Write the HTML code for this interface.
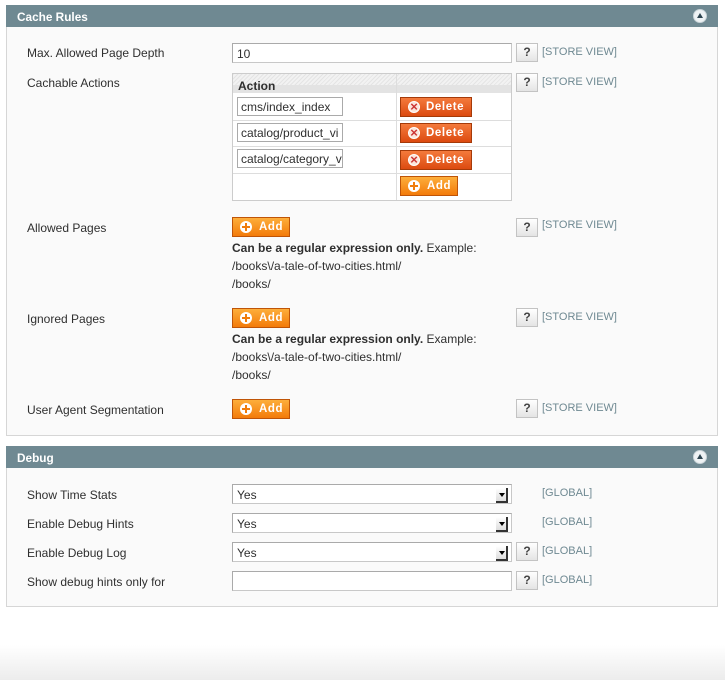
<!DOCTYPE html>
<html><head><meta charset="utf-8"><style>
*{box-sizing:border-box;margin:0;padding:0}
body{width:725px;height:680px;position:relative;background:#fff;font:12px "Liberation Sans",sans-serif;color:#2f2f2f;overflow:hidden}
.a{position:absolute}
.hd{position:absolute;left:6px;width:712px;height:22px;background:#6f8992;color:#fff;font-weight:bold;font-size:11.8px;padding:5px 0 0 11px}
.hd .t{position:absolute;right:11px;top:4px;width:14px;height:14px;border-radius:50%;background:#eef2f4;border:1px solid #c9d4d8}
.hd .t:after{content:"";position:absolute;left:3px;top:3px;border-left:3px solid transparent;border-right:3px solid transparent;border-bottom:5px solid #2d4450}
.pn{position:absolute;left:6px;width:712px;background:#fafafa;border:1px solid #d6d6d6;border-top:none}
.lb{position:absolute;left:27px}
.in{position:absolute;left:232px;width:280px;height:20px;background:#fff;border:1px solid #aaa;border-color:#aaa #c8c8c8 #c8c8c8 #aaa;padding:3px 4px;font-size:12px}
.q{position:absolute;left:516px;width:22px;height:19px;background:linear-gradient(#fff,#e4e4e4);border:1px solid #c3c3c3;font-weight:bold;text-align:center;line-height:17px;color:#444}
.sc{position:absolute;left:542px;color:#6f8992;font-size:11px}
.bt{position:absolute;height:20px;border:1px solid #bf5407;color:#fff;font-weight:bold;font-size:11.5px;line-height:18px;padding-left:26px;letter-spacing:.6px}
.or{background:linear-gradient(#fdae3b,#f37b0a)}
.rd{padding-left:25px;background:linear-gradient(#f47a3c,#dc4a10);border-color:#a53a09}
.bt i{position:absolute;left:7px;top:3px;width:12px;height:12px;border-radius:50%;background:#fff}
.or i:before,.or i:after{content:"";position:absolute;background:#f07d0c;left:5px;top:2px;width:2px;height:8px}
.or i:after{left:2px;top:5px;width:8px;height:2px}
.rd i{background:#fbe5da;border:1px solid #fff}
.rd i:before{content:"×";position:absolute;left:1px;top:-4px;color:#c33;font-size:13px;font-weight:bold}
.ti{position:absolute;left:237px;width:106px;height:19px;background:#fff;border:1px solid #aaa;padding:2px 3px;font-size:12px;overflow:hidden;white-space:nowrap}
.sel:after{content:"";position:absolute;right:3px;top:3px;width:10px;height:13px;border-right:2px solid #333;border-bottom:2px solid #333;background:linear-gradient(#fff,#ddd)}
.sel:before{content:"";position:absolute;right:6px;top:8px;border-left:3px solid transparent;border-right:3px solid transparent;border-top:4px solid #000;z-index:1}
.tx{position:absolute;left:232px}
</style></head><body>
<div class="hd" style="top:5px">Cache Rules<span class="t"></span></div>
<div class="pn" style="top:27px;height:409px"></div>
<div class="lb" style="top:46px">Max. Allowed Page Depth</div>
<div class="in" style="top:43px">10</div>
<div class="q" style="top:43px">?</div><div class="sc" style="top:46px">[STORE VIEW]</div>
<div class="lb" style="top:76px">Cachable Actions</div>
<div class="q" style="top:73px">?</div><div class="sc" style="top:76px">[STORE VIEW]</div>
<div class="a" style="left:232px;top:73px;width:280px;height:128px;background:#fff;border:1px solid #ccc"></div>
<div class="a" style="left:233px;top:74px;width:278px;height:19px;background:repeating-linear-gradient(135deg,#e4e4e4 0 1px,#f2f2f2 1px 3px)"></div>
<div class="a" style="left:233px;top:85px;width:278px;height:8px;background:#e3e3e3"></div>
<div class="a" style="left:238px;top:79px;font-weight:bold">Action</div>
<div class="a" style="left:396px;top:74px;width:1px;height:126px;background:#ddd"></div>
<div class="a" style="left:233px;top:120px;width:278px;height:1px;background:#ddd"></div>
<div class="a" style="left:233px;top:146px;width:278px;height:1px;background:#ddd"></div>
<div class="a" style="left:233px;top:173px;width:278px;height:1px;background:#ddd"></div>
<div class="ti" style="top:97px">cms/index_index</div>
<div class="ti" style="top:123px">catalog/product_vi</div>
<div class="ti" style="top:149px">catalog/category_v</div>
<div class="bt rd" style="left:400px;top:97px;width:72px"><i></i>Delete</div>
<div class="bt rd" style="left:400px;top:123px;width:72px"><i></i>Delete</div>
<div class="bt rd" style="left:400px;top:150px;width:72px"><i></i>Delete</div>
<div class="bt or" style="left:400px;top:176px;width:58px"><i></i>Add</div>

<div class="lb" style="top:221px">Allowed Pages</div>
<div class="bt or" style="left:232px;top:217px;width:58px"><i></i>Add</div>
<div class="q" style="top:218px">?</div><div class="sc" style="top:219px">[STORE VIEW]</div>
<div class="tx" style="top:241px"><b>Can be a regular expression only.</b> Example:</div>
<div class="tx" style="top:259px">/books\/a-tale-of-two-cities.html/</div>
<div class="tx" style="top:277px">/books/</div>

<div class="lb" style="top:312px">Ignored Pages</div>
<div class="bt or" style="left:232px;top:308px;width:58px"><i></i>Add</div>
<div class="q" style="top:308px">?</div><div class="sc" style="top:311px">[STORE VIEW]</div>
<div class="tx" style="top:332px"><b>Can be a regular expression only.</b> Example:</div>
<div class="tx" style="top:350px">/books\/a-tale-of-two-cities.html/</div>
<div class="tx" style="top:368px">/books/</div>

<div class="lb" style="top:403px">User Agent Segmentation</div>
<div class="bt or" style="left:232px;top:399px;width:58px"><i></i>Add</div>
<div class="q" style="top:399px">?</div><div class="sc" style="top:402px">[STORE VIEW]</div>

<div class="hd" style="top:446px">Debug<span class="t"></span></div>
<div class="pn" style="top:468px;height:139px"></div>
<div class="lb" style="top:488px">Show Time Stats</div>
<div class="in sel" style="top:484px">Yes</div><div class="sc" style="top:487px">[GLOBAL]</div>
<div class="lb" style="top:517px">Enable Debug Hints</div>
<div class="in sel" style="top:513px">Yes</div><div class="sc" style="top:516px">[GLOBAL]</div>
<div class="lb" style="top:546px">Enable Debug Log</div>
<div class="in sel" style="top:542px">Yes</div><div class="q" style="top:542px">?</div><div class="sc" style="top:545px">[GLOBAL]</div>
<div class="lb" style="top:575px">Show debug hints only for</div>
<div class="in" style="top:571px"></div><div class="q" style="top:571px">?</div><div class="sc" style="top:574px">[GLOBAL]</div>
<div class="a" style="left:0;top:645px;width:725px;height:35px;background:linear-gradient(#fff,#ececec)"></div>
</body></html>
